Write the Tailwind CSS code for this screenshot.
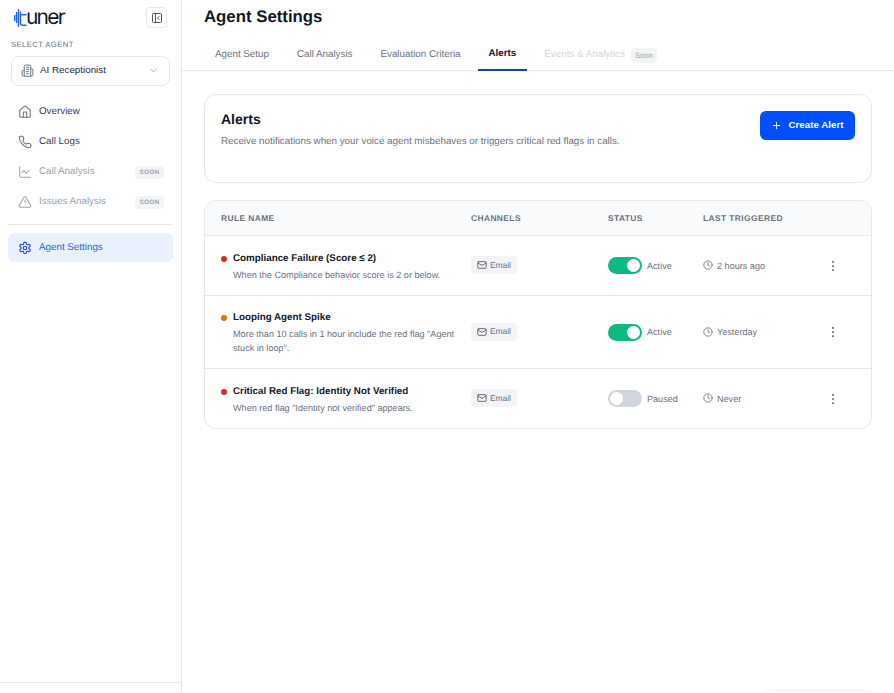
<!DOCTYPE html>
<html lang="en">
<head>
    <meta charset="UTF-8">
    <title>Agent Settings</title>
    <script src="https://cdn.jsdelivr.net/npm/@tailwindcss/browser@4"></script>
</head>
<body class="bg-white font-['Liberation_Sans',Arial,sans-serif] text-[#111827] [text-rendering:geometricPrecision]">
<div class="relative flex h-[693px] w-[894px] overflow-hidden">
    <!-- Sidebar -->
    <aside class="flex h-full w-[182px] shrink-0 flex-col border-r border-gray-200">
        <div class="flex h-[34px] items-center justify-between pl-[13px] pr-[14px] pt-[1px]">
            <div class="flex items-center">
                <svg width="14" height="18" viewBox="0 0 14 18" fill="none" stroke="#2563eb" stroke-width="1.4" stroke-linecap="round">
                    <path d="M1.7 6.5v5M3.6 3.5v10M5.5 .8v16.4M7.5 3v11c0 1.4.8 2.2 2.2 2.2H13"/>
                    <path d="M7.5 5.8H13" stroke-width="1.6"/>
                </svg>
                <span class="-ml-[1px] font-['Inter'] text-[21px] leading-none tracking-[-1.8px] text-[#0f172a]">uner</span>
            </div>
            <button class="flex h-[21px] w-[21px] items-center justify-center rounded border border-gray-200">
                <svg width="12" height="12" viewBox="0 0 24 24" fill="none" stroke="#4b5563" stroke-width="2" stroke-linecap="round" stroke-linejoin="round"><rect x="3" y="3" width="18" height="18" rx="2"/><path d="M9 3v18M16 15l-3-3 3-3"/></svg>
            </button>
        </div>
        <div class="mt-[5px] pl-[11px] text-[7.7px] leading-[11px] tracking-[0.4px] text-gray-500">SELECT AGENT</div>
        <button class="mx-[11px] mt-[6px] flex h-[30px] w-[159px] items-center justify-between rounded-lg border border-gray-200 pb-[1px] pl-[9px] pr-[10px] text-[9.8px] text-gray-800">
            <span class="flex items-center gap-[6px]">
                <svg width="13" height="13" viewBox="0 0 24 24" fill="none" stroke="#6b7280" stroke-width="1.8" stroke-linecap="round" stroke-linejoin="round"><path d="M6 22V4a2 2 0 0 1 2-2h8a2 2 0 0 1 2 2v18z"/><path d="M6 12H4a2 2 0 0 0-2 2v6a2 2 0 0 0 2 2h2M18 9h2a2 2 0 0 1 2 2v9a2 2 0 0 1-2 2h-2M10 6h4M10 10h4M10 14h4M10 18h4"/></svg>
                AI Receptionist
            </span>
            <svg width="11" height="11" viewBox="0 0 24 24" fill="none" stroke="#9ca3af" stroke-width="2" stroke-linecap="round" stroke-linejoin="round"><path d="m6 9 6 6 6-6"/></svg>
        </button>

        <!-- Nav -->
        <nav class="mt-[12px] flex flex-col gap-[2px] px-2 text-[9.8px]">
            <a class="flex h-[28px] items-center gap-[7px] pl-[10px] text-gray-700">
                <svg width="14" height="14" viewBox="0 0 24 24" fill="none" stroke="#6b7280" stroke-width="1.8" stroke-linecap="round" stroke-linejoin="round"><path d="M15 21v-8a1 1 0 0 0-1-1h-4a1 1 0 0 0-1 1v8"/><path d="M3 10a2 2 0 0 1 .7-1.5l7-6a2 2 0 0 1 2.6 0l7 6A2 2 0 0 1 21 10v9a2 2 0 0 1-2 2H5a2 2 0 0 1-2-2z"/></svg>
                Overview
            </a>
            <a class="flex h-[28px] items-center gap-[7px] pl-[10px] text-gray-700">
                <svg width="14" height="14" viewBox="0 0 24 24" fill="none" stroke="#6b7280" stroke-width="1.8" stroke-linecap="round" stroke-linejoin="round"><path d="M22 16.9v3a2 2 0 0 1-2.2 2 19.8 19.8 0 0 1-8.6-3.1 19.5 19.5 0 0 1-6-6 19.8 19.8 0 0 1-3.1-8.7A2 2 0 0 1 4.1 2h3a2 2 0 0 1 2 1.7c.1 1 .4 1.9.7 2.8a2 2 0 0 1-.5 2.1L8.1 9.9a16 16 0 0 0 6 6l1.3-1.3a2 2 0 0 1 2.1-.4c.9.3 1.8.5 2.8.7a2 2 0 0 1 1.7 2z"/></svg>
                Call Logs
            </a>
            <a class="flex h-[28px] items-center justify-between pl-[10px] pr-[9px] text-gray-400">
                <span class="flex items-center gap-[7px]">
                    <svg width="14" height="14" viewBox="0 0 24 24" fill="none" stroke="#9ca3af" stroke-width="1.8" stroke-linecap="round" stroke-linejoin="round"><path d="M3 3v16a2 2 0 0 0 2 2h16"/><path d="m19 9-5 5-4-4-3 3"/></svg>
                    Call Analysis
                </span>
                <span class="rounded-sm bg-gray-100 px-[4.5px] py-[2px] text-[6.3px] font-bold leading-[9px] tracking-[0.35px] text-gray-400">SOON</span>
            </a>
            <a class="flex h-[28px] items-center justify-between pl-[10px] pr-[9px] text-gray-400">
                <span class="flex items-center gap-[7px]">
                    <svg width="14" height="14" viewBox="0 0 24 24" fill="none" stroke="#9ca3af" stroke-width="1.8" stroke-linecap="round" stroke-linejoin="round"><path d="m21.7 18-8-14a2 2 0 0 0-3.5 0l-8 14A2 2 0 0 0 4 21h16a2 2 0 0 0 1.7-3"/><path d="M12 9v4M12 17h.01"/></svg>
                    Issues Analysis
                </span>
                <span class="rounded-sm bg-gray-100 px-[4.5px] py-[2px] text-[6.3px] font-bold leading-[9px] tracking-[0.35px] text-gray-400">SOON</span>
            </a>
        </nav>
        <div class="mx-2 mt-[8px] border-t border-gray-200"></div>
        <div class="mt-2 px-2 text-[9.8px]">
            <a class="flex h-[29px] items-center gap-[7px] rounded-md bg-[#eaf1fe] pl-[10px] pt-[1px] text-[#2563eb]">
                <svg width="14" height="14" viewBox="0 0 24 24" fill="none" stroke="#1d4ed8" stroke-width="2" stroke-linecap="round" stroke-linejoin="round"><path d="M12.2 2h-.4a2 2 0 0 0-2 2v.2a2 2 0 0 1-1 1.7l-.4.3a2 2 0 0 1-2 0l-.2-.1a2 2 0 0 0-2.7.7l-.2.4a2 2 0 0 0 .7 2.7l.2.1a2 2 0 0 1 1 1.7v.5a2 2 0 0 1-1 1.7l-.2.1a2 2 0 0 0-.7 2.7l.2.4a2 2 0 0 0 2.7.7l.2-.1a2 2 0 0 1 2 0l.4.3a2 2 0 0 1 1 1.7v.2a2 2 0 0 0 2 2h.4a2 2 0 0 0 2-2v-.2a2 2 0 0 1 1-1.7l.4-.3a2 2 0 0 1 2 0l.2.1a2 2 0 0 0 2.7-.7l.2-.4a2 2 0 0 0-.7-2.7l-.2-.1a2 2 0 0 1-1-1.7v-.5a2 2 0 0 1 1-1.7l.2-.1a2 2 0 0 0 .7-2.7l-.2-.4a2 2 0 0 0-2.7-.7l-.2.1a2 2 0 0 1-2 0l-.4-.3a2 2 0 0 1-1-1.7V4a2 2 0 0 0-2-2"/><circle cx="12" cy="12" r="3"/></svg>
                Agent Settings
            </a>
        </div>
        <div class="mt-auto mb-[10px] border-t border-gray-200"></div>
    </aside>

    <!-- Main -->
    <main class="min-w-0 flex-1">
        <h1 class="pl-[22px] pt-[5px] text-[16.8px] font-bold leading-[23px]">Agent Settings</h1>
        <div class="mt-[10px] flex h-[33px] items-stretch gap-[6px] border-b border-gray-200 pl-[22px] pt-[2px] text-[9.8px] text-gray-500">
            <a class="flex items-center px-[11px]">Agent Setup</a>
            <a class="flex items-center px-[11px]">Call Analysis</a>
            <a class="flex items-center px-[11px]">Evaluation Criteria</a>
            <a class="-mb-px flex items-center border-b-2 border-[#1e40af] px-[11px] font-bold text-[#111827]">Alerts</a>
            <a class="flex items-center gap-[6px] pl-[11px] text-gray-300">Events &amp; Analytics <span class="rounded-sm bg-gray-100 px-[4px] py-[2px] text-[7.7px] leading-[11px] text-gray-400">Soon</span></a>
        </div>

        <div class="px-[22px] pt-[23px]">
            <!-- Alerts card -->
            <section class="flex h-[89px] w-[668px] items-start justify-between rounded-xl border border-gray-200 pl-4 pr-4 pt-4">
                <div>
                    <h2 class="-mt-px text-[14px] font-bold leading-[19px]">Alerts</h2>
                    <p class="mt-[5px] text-[9.8px] leading-[16px] text-gray-500">Receive notifications when your voice agent misbehaves or triggers critical red flags in calls.</p>
                </div>
                <button class="flex h-[29px] w-[95px] items-center justify-center gap-[6px] rounded-md bg-[#0050ff] text-[9.8px] font-bold text-white">
                    <svg width="11" height="11" viewBox="0 0 24 24" fill="none" stroke="#fff" stroke-width="2" stroke-linecap="round"><path d="M5 12h14M12 5v14"/></svg>
                    Create Alert
                </button>
            </section>

            <!-- Rules table -->
            <section class="mt-[17px] w-[668px] overflow-hidden rounded-xl border border-gray-200 text-[9.1px]">
                <div class="grid h-[35px] grid-cols-[250px_137px_95px_123px_1fr] items-center border-b border-gray-200 bg-gray-50 px-4 text-[8.4px] font-bold tracking-[0.42px] text-gray-500">
                    <span>RULE NAME</span><span>CHANNELS</span><span>STATUS</span><span>LAST TRIGGERED</span><span></span>
                </div>

                <div class="grid h-[60px] grid-cols-[250px_137px_95px_123px_1fr] items-center border-b border-gray-200 px-4">
                    <div class="pr-[2px] pt-[2px]">
                        <div class="flex items-center gap-[6px] text-[9.8px] font-bold leading-[14px]"><span class="h-[6px] w-[6px] rounded-full bg-[#dc2626]"></span>Compliance Failure (Score ≤ 2)</div>
                        <p class="mt-[2px] pl-[12px] leading-[14px] text-gray-500">When the Compliance behavior score is 2 or below.</p>
                    </div>
                    <div><span class="inline-flex h-[18px] items-center gap-[3px] rounded bg-gray-100 px-[6px] text-[8.4px] text-gray-500"><svg width="10" height="10" viewBox="0 0 24 24" fill="none" stroke="#4b5563" stroke-width="2" stroke-linecap="round" stroke-linejoin="round"><rect x="2" y="4" width="20" height="16" rx="2"/><path d="m22 7-10 6L2 7"/></svg>Email</span></div>
                    <div class="flex items-center gap-[5px] text-gray-500"><span class="flex h-[17px] w-[34px] items-center justify-end rounded-full bg-[#10b981] pr-[2px]"><span class="h-[13px] w-[13px] rounded-full bg-white"></span></span><span class="pt-[2px]">Active</span></div>
                    <div class="flex items-center gap-[4px] text-gray-500"><svg width="10" height="10" viewBox="0 0 24 24" fill="none" stroke="#6b7280" stroke-width="2" stroke-linecap="round" stroke-linejoin="round"><circle cx="12" cy="12" r="10"/><path d="M12 6v6l4 2"/></svg><span class="pt-[2px]">2 hours ago</span></div>
                    <svg width="14" height="14" viewBox="0 0 24 24" fill="#374151"><circle cx="12" cy="5" r="1.5"/><circle cx="12" cy="12" r="1.5"/><circle cx="12" cy="19" r="1.5"/></svg>
                </div>

                <div class="grid h-[73px] grid-cols-[250px_137px_95px_123px_1fr] items-center border-b border-gray-200 px-4">
                    <div class="pr-[2px] pt-[2px]">
                        <div class="flex items-center gap-[6px] text-[9.8px] font-bold leading-[14px]"><span class="h-[6px] w-[6px] rounded-full bg-[#d97706]"></span>Looping Agent Spike</div>
                        <p class="mt-[2px] pl-[12px] leading-[14px] text-gray-500">More than 10 calls in 1 hour include the red flag "Agent stuck in loop".</p>
                    </div>
                    <div><span class="inline-flex h-[18px] items-center gap-[3px] rounded bg-gray-100 px-[6px] text-[8.4px] text-gray-500"><svg width="10" height="10" viewBox="0 0 24 24" fill="none" stroke="#4b5563" stroke-width="2" stroke-linecap="round" stroke-linejoin="round"><rect x="2" y="4" width="20" height="16" rx="2"/><path d="m22 7-10 6L2 7"/></svg>Email</span></div>
                    <div class="flex items-center gap-[5px] text-gray-500"><span class="flex h-[17px] w-[34px] items-center justify-end rounded-full bg-[#10b981] pr-[2px]"><span class="h-[13px] w-[13px] rounded-full bg-white"></span></span><span class="pt-[2px]">Active</span></div>
                    <div class="flex items-center gap-[4px] text-gray-500"><svg width="10" height="10" viewBox="0 0 24 24" fill="none" stroke="#6b7280" stroke-width="2" stroke-linecap="round" stroke-linejoin="round"><circle cx="12" cy="12" r="10"/><path d="M12 6v6l4 2"/></svg><span class="pt-[2px]">Yesterday</span></div>
                    <svg width="14" height="14" viewBox="0 0 24 24" fill="#374151"><circle cx="12" cy="5" r="1.5"/><circle cx="12" cy="12" r="1.5"/><circle cx="12" cy="19" r="1.5"/></svg>
                </div>

                <div class="grid h-[59px] grid-cols-[250px_137px_95px_123px_1fr] items-center px-4">
                    <div class="pr-[2px] pt-[2px]">
                        <div class="flex items-center gap-[6px] text-[9.8px] font-bold leading-[14px]"><span class="h-[6px] w-[6px] rounded-full bg-[#dc2626]"></span>Critical Red Flag: Identity Not Verified</div>
                        <p class="mt-[2px] pl-[12px] leading-[14px] text-gray-500">When red flag "Identity not verified" appears.</p>
                    </div>
                    <div><span class="inline-flex h-[18px] items-center gap-[3px] rounded bg-gray-100 px-[6px] text-[8.4px] text-gray-500"><svg width="10" height="10" viewBox="0 0 24 24" fill="none" stroke="#4b5563" stroke-width="2" stroke-linecap="round" stroke-linejoin="round"><rect x="2" y="4" width="20" height="16" rx="2"/><path d="m22 7-10 6L2 7"/></svg>Email</span></div>
                    <div class="flex items-center gap-[5px] text-gray-500"><span class="flex h-[17px] w-[34px] items-center rounded-full bg-gray-300 pl-[2px]"><span class="h-[13px] w-[13px] rounded-full bg-white"></span></span><span class="pt-[2px]">Paused</span></div>
                    <div class="flex items-center gap-[4px] text-gray-500"><svg width="10" height="10" viewBox="0 0 24 24" fill="none" stroke="#6b7280" stroke-width="2" stroke-linecap="round" stroke-linejoin="round"><circle cx="12" cy="12" r="10"/><path d="M12 6v6l4 2"/></svg><span class="pt-[2px]">Never</span></div>
                    <svg width="14" height="14" viewBox="0 0 24 24" fill="#374151"><circle cx="12" cy="5" r="1.5"/><circle cx="12" cy="12" r="1.5"/><circle cx="12" cy="19" r="1.5"/></svg>
                </div>
            </section>
        </div>
    </main>

    <!-- faint edge of a floating panel, cut off by the window -->
    <div class="absolute left-[762px] top-[690px] h-10 w-[112px] rounded-lg border border-gray-100 bg-white"></div>
</div>
</body>
</html>
